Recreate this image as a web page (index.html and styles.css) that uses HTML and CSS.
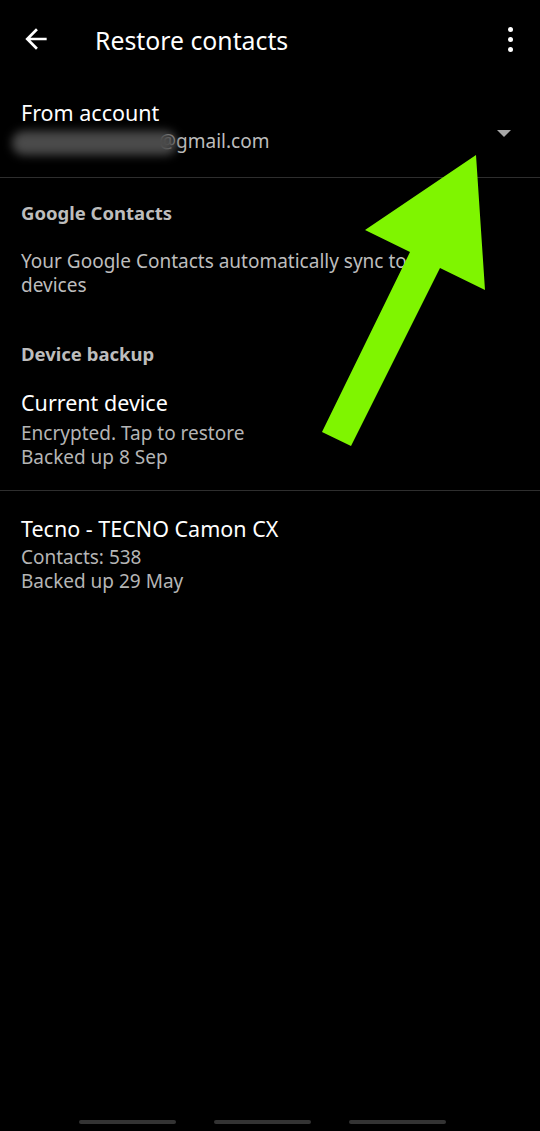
FILE: index.html
```html
<!DOCTYPE html>
<html>
<head>
<meta charset="utf-8">
<link rel="stylesheet" href="styles.css">
</head>
<body>
<div class="screen">
  <header class="appbar">
    <svg class="back" width="32" height="32" viewBox="0 0 24 24"><path fill="#fff" d="M20 11H7.83l5.59-5.59L12 4l-8 8 8 8 1.41-1.41L7.83 13H20v-2z"/></svg>
    <div class="title">Restore contacts</div>
    <div class="kebab"><span></span><span></span><span></span></div>
  </header>

  <div class="account">
    <div class="account-text">
      <div class="primary">From account</div>
      <div class="email"><span class="blur"></span><span class="mail">@gmail.com</span></div>
    </div>
    <div class="caret"></div>
  </div>
  <div class="divider"></div>

  <section class="section">
    <div class="section-head">Google Contacts</div>
    <div class="body">Your Google Contacts automatically sync to<br>devices</div>
    <div class="section-head head2">Device backup</div>
    <div class="item">
      <div class="primary">Current device</div>
      <div class="secondary">Encrypted. Tap to restore<br>Backed up 8 Sep</div>
    </div>
  </section>
  <div class="divider"></div>

  <section class="item item2">
    <div class="primary">Tecno - TECNO Camon CX</div>
    <div class="secondary s2">Contacts: 538<br>Backed up 29 May</div>
  </section>

  <div class="navbar"><span></span><span></span><span></span></div>

  <svg class="pointer" width="540" height="1131" viewBox="0 0 540 1131"><polygon fill="#7ff500" points="476,155 485,290 440,268 351,446 322,432 410,252 365,230"/></svg>
</div>
</body>
</html>
```

FILE: styles.css
```css
html, body {
  margin: 0;
  padding: 0;
  background: #000;
}
.screen {
  position: relative;
  width: 540px;
  height: 1131px;
  overflow: hidden;
  background: #000;
  font-family: "Noto Sans", "Open Sans", sans-serif;
  color: #fff;
  display: flex;
  flex-direction: column;
}
.appbar {
  height: 80px;
  display: flex;
  align-items: center;
  padding-left: 20px;
  padding-right: 27px;
}
.back {
  display: block;
  margin-top: -2px;
}
.title {
  margin-left: 43px;
  font-size: 24.8px;
  color: #fff;
  flex: 1;
  margin-top: -1px;
}
.kebab {
  display: flex;
  flex-direction: column;
  gap: 5px;
  margin-top: -2px;
}
.kebab span {
  width: 5px;
  height: 5px;
  border-radius: 50%;
  background: #fff;
}
.account {
  display: flex;
  align-items: center;
  padding: 19px 29px 21px 21px;
}
.account-text {
  flex: 1;
}
.primary {
  font-size: 21.5px;
  line-height: 28px;
  color: #fff;
}
.email {
  display: flex;
  align-items: center;
  font-size: 19px;
  line-height: 29px;
  color: #bdbdbd;
  margin-left: -9px;
}
.blur {
  position: relative;
  z-index: 1;
  display: inline-block;
  width: 165px;
  height: 24px;
  border-radius: 12px;
  background: #4a4a4a;
  filter: blur(5px);
  margin-right: -18px;
  margin-top: 3px;
}
.caret {
  width: 0;
  height: 0;
  border-left: 7px solid transparent;
  border-right: 7px solid transparent;
  border-top: 7px solid #a8a8a8;
  margin-top: 12px;
}
.divider {
  height: 1px;
  background: #2e2e2e;
}
.section {
  padding: 23px 21px 21px;
}
.section-head {
  font-size: 18.5px;
  line-height: 24px;
  font-weight: 700;
  color: #bdbdbd;
}
.head2 {
  margin-top: 45px;
}
.body {
  margin-top: 24px;
  font-size: 19px;
  line-height: 24px;
  color: #bdbdbd;
}
.item {
  margin-top: 23px;
}
.secondary {
  margin-top: 4px;
  font-size: 19px;
  line-height: 24px;
  color: #b5b5b5;
}
.item2 {
  margin-top: 0;
  padding: 24px 21px 0;
}
.s2 {
  margin-top: 2px;
}
.navbar {
  margin-top: auto;
  margin-bottom: 7px;
  padding-right: 16px;
  display: flex;
  justify-content: center;
  gap: 38px;
}
.navbar span {
  width: 97px;
  height: 4px;
  border-radius: 2px;
  background: #333;
}
.pointer {
  position: absolute;
  left: 0;
  top: 0;
  pointer-events: none;
}
```
